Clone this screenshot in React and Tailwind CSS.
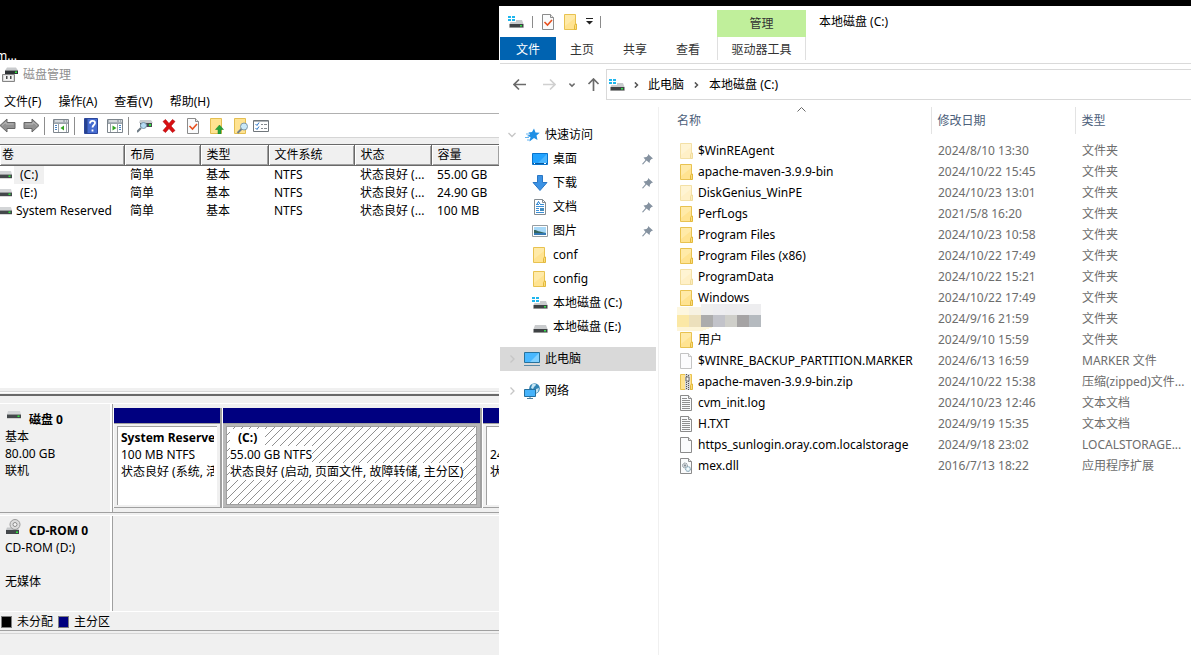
import React, { useState } from "react";

const volumes = [
  { name: "(C:)", size: "55.00 GB", drive: true },
  { name: "(E:)", size: "24.90 GB", drive: true },
  { name: "System Reserved", size: "100 MB" },
];

const files = [
  { name: "$WinREAgent", date: "2024/8/10 13:30", type: "文件夹", icon: "faded" },
  { name: "apache-maven-3.9.9-bin", date: "2024/10/22 15:45", type: "文件夹", icon: "folder" },
  { name: "DiskGenius_WinPE", date: "2024/10/23 13:01", type: "文件夹", icon: "faded" },
  { name: "PerfLogs", date: "2021/5/8 16:20", type: "文件夹", icon: "folder" },
  { name: "Program Files", date: "2024/10/23 10:58", type: "文件夹", icon: "folder" },
  { name: "Program Files (x86)", date: "2024/10/22 17:49", type: "文件夹", icon: "folder" },
  { name: "ProgramData", date: "2024/10/22 15:21", type: "文件夹", icon: "faded" },
  { name: "Windows", date: "2024/10/22 17:49", type: "文件夹", icon: "folder" },
  { name: "", date: "2024/9/16 21:59", type: "文件夹", icon: "mosaic" },
  { name: "用户", date: "2024/9/10 15:59", type: "文件夹", icon: "folder" },
  { name: "$WINRE_BACKUP_PARTITION.MARKER", date: "2024/6/13 16:59", type: "MARKER 文件", icon: "fadedFile" },
  { name: "apache-maven-3.9.9-bin.zip", date: "2024/10/22 15:38", type: "压缩(zipped)文件...", icon: "zip" },
  { name: "cvm_init.log", date: "2024/10/23 12:46", type: "文本文档", icon: "text" },
  { name: "H.TXT", date: "2024/9/19 15:35", type: "文本文档", icon: "text" },
  { name: "https_sunlogin.oray.com.localstorage", date: "2024/9/18 23:02", type: "LOCALSTORAGE...", icon: "file" },
  { name: "mex.dll", date: "2016/7/13 18:22", type: "应用程序扩展", icon: "dll" },
];

function Folder({ faded }) {
  return (
    <svg width="14" height="16" viewBox="0 0 14 16" opacity={faded ? 0.5 : 1}>
      <path d="M.5.5h11v15H.5z" fill="#ffe391" stroke="#e8c250" />
      <path d="M1 1h10v3L1 12z" fill="#ffeaa8" />
      <path d="M10.500 15.500v-4l1-1.500h1v5.500z" fill="#fbdc7c" stroke="#e3b93c" />
    </svg>
  );
}

function Page({ kind }) {
  const pale = kind === "fadedFile";
  return (
    <svg width="13" height="16" viewBox="0 0 13 16" opacity={pale ? 0.5 : 1}>
      <path d="M.5.5h8l3 3v12H.5z" fill="#fafbfc" stroke="#8b8b8b" />
      <path d="M8.500.5v3h3" fill="#e8e8e8" stroke="#8b8b8b" />
      {kind === "text" && (
        <path d="M2 3.500h5M2 5.500h8M2 7.500h8M2 9.500h8M2 11.500h8M2 13.500h8" stroke="#8f8f8f" />
      )}
      {kind === "dll" && (
        <>
          <circle cx="5" cy="7.500" r="2.500" fill="#d6dade" stroke="#8b959c" strokeDasharray="1.500 .6" />
          <circle cx="5" cy="7.500" r="1" fill="#7c868d" />
          <circle cx="8" cy="11" r="2.500" fill="#d3e5ee" stroke="#7e9cab" strokeDasharray="1.500 .6" />
          <circle cx="8" cy="11" r="1" fill="#fff" />
        </>
      )}
      {kind === "check" && <path d="m2.500 8 3 3 4.500-5" fill="none" stroke="#e8501e" strokeWidth="1.600" />}
    </svg>
  );
}

function Zip() {
  return (
    <svg width="14" height="16" viewBox="0 0 14 16">
      <path d="M.5.5h11v15H.5z" fill="#ffe391" stroke="#e8c250" />
      <path d="M5 0h5v16H5z" fill="#d6d6d6" />
      <path d="M6.500 0v16M8.500 1v15" stroke="#555" strokeDasharray="1 1" />
      <path d="M6 3h3v4H6z" fill="#f4f4f4" stroke="#6d6d6d" />
      <path d="M10.500 15.500v-4l1-1.500h1v5.500z" fill="#fbdc7c" stroke="#e3b93c" />
    </svg>
  );
}

function Drive({ windows }) {
  return (
    <svg width="16" height="16" viewBox="0 0 16 16">
      {windows && <path d="M0 2h3v2H0zM4 2h3v2H4zM0 5h3v2H0zM4 5h3v2H4z" fill="#1eb6ee" />}
      <path d={windows ? "M8 6h6l1.500 4h-14L2.500 8H8z" : "M3 6h11l1.500 4h-14z"} fill="#c9cbcd" />
      <path d="M1.500 10h14v3.500h-14z" fill="#3f4245" />
      <path d="M1.500 13.500h14v.500h-14z" fill="#888" />
      <path d="M12 11h2v1.500h-2z" fill="#35e04a" />
    </svg>
  );
}

// flat drive used in the volume list and the disk labels
function SmallDrive() {
  return (
    <svg width="14" height="8" viewBox="0 0 14 8">
      <path d="M1 0h12l1 3.500H0z" fill="#d3d5d7" />
      <path d="M0 3.500h14V7H0z" fill="#44484b" />
      <path d="M0 7h14v.5H0z" fill="#b0b0b0" />
      <path d="M10.500 4.500h2v1.500h-2z" fill="#2ee83c" />
    </svg>
  );
}

function CdDrive() {
  return (
    <svg width="16" height="16" viewBox="0 0 16 16">
      <path d="M2 8.500h11l1 2.500H1z" fill="#c4c6c8" />
      <circle cx="10" cy="5.500" r="5" fill="#dcdcdc" stroke="#9a9a9a" />
      <circle cx="10" cy="5.500" r="2" fill="#f4f4f4" stroke="#8d8d8d" />
      <path d="M1 11h13v4H1z" fill="#44484b" />
      <path d="M11 12.500h2v1.500h-2z" fill="#2ee83c" />
    </svg>
  );
}

function DiskManagementIcon() {
  return (
    <svg width="17" height="16" viewBox="0 0 17 16">
      <path d="M3 3.500 5 .5h9l2 3z" fill="#c9cbcd" />
      <path d="M3 3.500h13V7H3z" fill="#2e3235" />
      <path d="M13 4.500h2V6h-2z" fill="#2ee83c" />
      <path d="M.5 7.500h12v7H.5z" fill="#d9d9d9" stroke="#858585" />
      <path d="M2 8.500h9v5H2z" fill="#f5f5f5" />
      <path d="M4 9h1.500v3H4zM8 9h1.500v3H8z" fill="#4a4a4a" />
    </svg>
  );
}

function Arrow({ right }) {
  return (
    <svg width="17" height="15" viewBox="0 0 17 15" className={right ? "-scale-x-100" : ""}>
      <path d="M1 7.500 8 1v3.500h8v6H8V14z" fill="#929292" stroke="#666" />
      <path d="M3 7.500 7 4v2h7.500" fill="none" stroke="#b8b8b8" />
    </svg>
  );
}

function PaneIcon({ right }) {
  return (
    <svg width="16" height="14" viewBox="0 0 16 14">
      <path d="M.5.5h15v13H.5z" fill="#fff" stroke="#7d858c" />
      <path d="M1 1h14v3H1z" fill="#a9b1b8" />
      <path d="M2 2h8M12 2h1M14 2h1" stroke="#fff" />
      <path d={right ? "M1 4.500h14M3.500 5v8M10.500 5v8" : "M1 4.500h14M5.500 5v8M13.500 5v8"} stroke="#9ba3aa" />
      <path d={right ? "M12 6.500h2M12 8.500h2M12 10.500h2" : "M2 6.500h2M2 8.500h2M2 10.500h2"} stroke="#4a84c4" />
      {right ? <path d="m5.500 6.500 4 2.500-4 2.500z" fill="#33a522" /> : <path d="M11 6.500 7.500 9l3.500 2.500z" fill="#33a522" />}
    </svg>
  );
}

function HelpIcon() {
  return (
    <svg width="14" height="16" viewBox="0 0 14 16">
      <path d="M.5.500h13v15H.5z" fill="#456bd0" stroke="#2c469b" />
      <path d="M1 1h2.500v14H1z" fill="#26428f" />
      <path d="M6 5.500C6 2 11 2 11 5c0 2-2.500 2-2.500 4.500M8.500 11.500v2" fill="none" stroke="#fff" strokeWidth="1.800" />
    </svg>
  );
}

function ConnectIcon() {
  return (
    <svg width="16" height="14" viewBox="0 0 16 14">
      <path d="M3 1h11l2 3H2z" fill="#c8cccf" />
      <path d="M3 4h12v4H3z" fill="#484d50" />
      <path d="M12 5h2v2h-2z" fill="#2ee83c" />
      <circle cx="6.500" cy="6.500" r="3" fill="#b5dcf5" stroke="#7895a9" />
      <path d="m4 9-4 4" stroke="#6d7a84" strokeWidth="2" />
    </svg>
  );
}

function DeleteIcon() {
  return (
    <svg width="14" height="14" viewBox="0 0 14 14">
      <path d="m1 2.500 2.500-2L7 4.500l3.500-4L13 2.500 9 7l4 4.500-2.500 2L7 9.500l-3.500 4L1 11.500 5 7z" fill="#d90f12" stroke="#ad0508" strokeWidth=".6" />
    </svg>
  );
}

function FolderAction({ search }) {
  return (
    <svg width="16" height="16" viewBox="0 0 16 16">
      <path d="M1.500.5h11v15h-11z" fill="#ffe391" stroke="#e3be52" />
      {search ? (
        <>
          <circle cx="11" cy="8.500" r="3.500" fill="#c9e8f8" stroke="#7f98a8" />
          <path d="m8.500 11-4 4" stroke="#71808b" strokeWidth="2" />
        </>
      ) : (
        <path d="m10.500 7 4 4.500H12V16H9v-4.500H6.500z" fill="#25a43a" stroke="#14802a" strokeWidth=".5" />
      )}
    </svg>
  );
}

function ListIcon() {
  return (
    <svg width="16" height="12" viewBox="0 0 16 12">
      <path d="M.5.5h15v11H.5z" fill="#fff" stroke="#70767b" />
      <path d="M1 1.500h14" stroke="#b0b5b9" />
      <path d="m2.500 4 1.500 1.500 2-3M2.500 8 4 9.500l2-3" fill="none" stroke="#2472c8" />
      <path d="M8 4.500h2M11 4.500h3M8 8.500h2M11 8.500h3" stroke="#858b90" />
    </svg>
  );
}

function StarIcon() {
  return (
    <svg width="15" height="14" viewBox="0 0 15 14">
      <path d="m9 .5 1.500 4 4.200.200-3.200 2.800 1 4.500L9 10l-4.500 3.500L5.500 9 2 8l3-1.500L3.500 4.500 7 4z" fill="#1f8fe5" />
      <path d="M0 9.500h4M1 6h3M2 12h3" stroke="#66b4ef" />
    </svg>
  );
}

function DesktopIcon() {
  return (
    <svg width="16" height="12" viewBox="0 0 16 12">
      <path d="M.5.500h15v11H.5z" fill="#22a3ff" stroke="#0874cd" />
      <path d="m15 1-9 9h9z" fill="#4ab6ff" />
      <path d="M1 10.500h14" stroke="#075aa0" />
      <path d="M2 10.500h1M12 10.500h2" stroke="#fff" />
    </svg>
  );
}

function DownloadIcon() {
  return (
    <svg width="16" height="16" viewBox="0 0 16 16">
      <path d="M5.500.5h5v7H15L8 15.500 1 7.500h4.500z" fill="#3b92e4" stroke="#2a77c5" />
    </svg>
  );
}

function DocumentIcon() {
  return (
    <svg width="12" height="16" viewBox="0 0 12 16">
      <path d="M.5.5h8l3 3v12H.5z" fill="#fff" stroke="#858c91" />
      <path d="M8.500.5v3h3" fill="none" stroke="#858c91" />
      <path d="M2 5.500h3M6 5.500h4M2 7.500h8M2 9.500h3M2 11.500h3M2 13.500h8" stroke="#3b8fd6" />
      <path d="m3 5 1.500-2.500L6 5" fill="none" stroke="#1876ca" />
      <path d="M6 9h4v3H6z" fill="#438bbd" />
    </svg>
  );
}

function PictureIcon() {
  return (
    <svg width="16" height="12" viewBox="0 0 16 12">
      <path d="M.5.5h15v11H.5z" fill="#fff" stroke="#969da2" />
      <path d="M2 2h12v8H2z" fill="#a8d9f8" />
      <path d="M2 5c3 0 5 2 12 3v2H2z" fill="#35665f" />
      <path d="M2 8h12v2H2z" fill="#3579b4" />
    </svg>
  );
}

function ComputerIcon() {
  return (
    <svg width="16" height="16" viewBox="0 0 16 16">
      <path d="M.5 1.500h15v10H.5z" fill="#49b8ff" stroke="#28729c" />
      <path d="m15 2-9 9h9z" fill="#80d0ff" />
      <path d="M0 14.500h16" stroke="#5a89a6" />
    </svg>
  );
}

function NetworkIcon() {
  return (
    <svg width="16" height="16" viewBox="0 0 16 16">
      <circle cx="10.500" cy="5.500" r="5.300" fill="#3083b3" />
      <path d="M8 2c1-2 4-1 4 0l-2 2-1 2-2-1zM12 6l3-1-1 4-2 1z" fill="#c6e6f4" />
      <path d="M.5 6.500h11v7H.5z" fill="#46b3fb" stroke="#246f9e" />
      <path d="M6 14v1.500M3 15.500h6" stroke="#4c7e9b" />
    </svg>
  );
}

function Pin() {
  return (
    <svg width="11" height="11" viewBox="0 0 11 11">
      <path d="m6 0 5 4.500-1.500.5L8 6.500 7.500 9l-3-2.500L1 10.500 0 10l3.500-4L1.500 3.500l3-.500L6 1.500z" fill="#8592a0" />
    </svg>
  );
}

function Chevron({ down, small, className }) {
  return (
    <svg width={small ? 6 : 8} height={small ? 6 : 8} viewBox="0 0 8 8" className={className}>
      <path d={down ? "m.5 2 3.500 3.500L7.500 2" : "m2.500.5 3.500 3.500-3.500 3.500"} fill="none" stroke="currentColor" strokeWidth={small ? 2 : 1.3} />
    </svg>
  );
}

function NavArrow({ up, right }) {
  return (
    <svg width="13" height="13" viewBox="0 0 13 13" className={up ? "rotate-90" : right ? "rotate-180" : ""}>
      <path d="M1 6.500h12M6 1.500l-5 5 5 5" fill="none" stroke="currentColor" strokeWidth="1.700" />
    </svg>
  );
}

// pixelated cover over a hidden file name
function Mosaic() {
  const dark = ["#fbe8a5", "#ece0bc", "#acacac", "#c2c3ca", "#cfcfca", "#a5a3a4", "#b5babf"];
  const light = ["#fdf7df", "#f7f2e2", "#efefef", "#ededf0", "#ececee", "#ededef", "#ededef"];
  return (
    <svg width="84" height="27" viewBox="0 0 84 27" shapeRendering="crispEdges" className="absolute left-0 -top-1">
      {light.map((c, i) => (
        <rect key={c + i} x={i * 12} y={i < 2 ? 3 : 0} width="12" height="12" fill={c} />
      ))}
      {dark.map((c, i) => (
        <rect key={c} x={i * 12} y="11" width="12" height="12" fill={c} />
      ))}
      <path d="M0 23h36l-12 4H0z" fill="#fdf5d8" />
    </svg>
  );
}

function FileIcon({ kind }) {
  if (kind === "folder") return <Folder />;
  if (kind === "faded") return <Folder faded />;
  if (kind === "zip") return <Zip />;
  return <Page kind={kind} />;
}

function ToolButton({ label, children }) {
  return (
    <button type="button" aria-label={label} className="flex h-5 w-6 shrink-0 items-center justify-center">
      {children}
    </button>
  );
}

function ToolSeparator() {
  return <span className="mr-1 ml-px h-[18px] w-px shrink-0 bg-[#8d8d8d]" />;
}

function VolumeTable() {
  const heads = ["卷", "布局", "类型", "文件系统", "状态", "容量"];
  return (
    <table className="w-full table-fixed border-collapse text-left leading-[18px]">
      <colgroup>
        <col className="w-[124px]" />
        <col className="w-[76px]" />
        <col className="w-[68px]" />
        <col className="w-[86px]" />
        <col className="w-[77px]" />
        <col />
      </colgroup>
      <thead>
        <tr className="h-[21px] bg-[#f0f0f0]">
          {heads.map((h, i) => (
            <th
              key={h}
              className={`border-t border-b border-[#696969] font-normal shadow-[inset_1px_1px_0_#fff,inset_-1px_-1px_0_#a0a0a0] ${
                i < heads.length - 1 ? "border-r" : ""
              } ${i === 0 ? "pl-0.5" : "pl-1.5"}`}
            >
              {h}
            </th>
          ))}
        </tr>
      </thead>
      <tbody>
        {volumes.map((v, i) => (
          <tr key={v.name} className="h-[18px] whitespace-nowrap">
            <td className="p-0">
              <div className="flex items-center">
                <span className="-ml-0.5 w-4 shrink-0">
                  <SmallDrive />
                </span>
                <span className={`${v.drive ? "px-1.5" : "pl-0.5"} ${i === 0 ? "bg-[#f0f0f0]" : ""}`}>{v.name}</span>
              </div>
            </td>
            <td className="pl-1.5">简单</td>
            <td className="pl-1.5">基本</td>
            <td className="pl-1.5">NTFS</td>
            <td className="pl-1.5">状态良好 (...</td>
            <td className="pl-1.5">{v.size}</td>
          </tr>
        ))}
      </tbody>
    </table>
  );
}

function Partition({ width, title, size, status, selected }) {
  return (
    <div className={`flex shrink-0 flex-col border-r-2 border-l border-r-[#a0a0a0] border-l-white ${width}`}>
      <div className="h-[15px] bg-[#000080]" />
      <div className={`flex flex-1 border-t border-b border-[#a0a0a0] px-[3px] py-0.5 ${selected ? "bg-[#b9b9b9]" : "bg-[#f0f0f0]"}`}>
        <div
          className={`relative min-w-0 flex-1 border-[#a0a0a0] bg-white px-[3px] pt-0.5 whitespace-nowrap ${
            selected ? "border" : "border-t border-l"
          }`}
        >
          {selected && (
            <svg className="absolute inset-0 h-full w-full">
              <defs>
                <pattern id="hatch" width="8" height="8" patternUnits="userSpaceOnUse">
                  <path d="M-1 9 9-1" stroke="#909090" strokeWidth="1" shapeRendering="crispEdges" />
                </pattern>
              </defs>
              <rect width="100%" height="100%" fill="url(#hatch)" />
            </svg>
          )}
          <div className="relative flex flex-col items-start overflow-hidden leading-[17px]">
            <b className={`min-h-[17px] bg-white ${selected ? "px-2" : ""}`}>{title}</b>
            <span className="bg-white">{size}</span>
            <span className="bg-white">{status}</span>
          </div>
        </div>
      </div>
    </div>
  );
}

function DiskManagement() {
  return (
    <section className="flex min-w-0 flex-1 flex-col overflow-hidden bg-white">
      <header className="flex h-[30px] items-center gap-1 pl-0.5 text-[#8f8f8f]">
        <DiskManagementIcon />
        <h1>磁盘管理</h1>
      </header>
      <nav className="flex h-[24px] items-center gap-[17px] border-b border-[#b0b0b0] pl-1">
        <button type="button">文件(F)</button>
        <button type="button">操作(A)</button>
        <button type="button">查看(V)</button>
        <button type="button">帮助(H)</button>
      </nav>
      <div className="flex h-[23px] items-center">
        <div className="-ml-[5px] flex items-center">
          <ToolButton label="后退"><Arrow /></ToolButton>
          <ToolButton label="前进"><Arrow right /></ToolButton>
          <ToolSeparator />
          <ToolButton label="显示控制台树"><PaneIcon /></ToolButton>
          <ToolSeparator />
          <ToolButton label="帮助"><HelpIcon /></ToolButton>
          <ToolButton label="显示操作窗格"><PaneIcon right /></ToolButton>
          <ToolSeparator />
          <ToolButton label="连接"><ConnectIcon /></ToolButton>
          <ToolButton label="删除"><DeleteIcon /></ToolButton>
          <ToolButton label="属性"><Page kind="check" /></ToolButton>
          <ToolButton label="打开"><FolderAction /></ToolButton>
          <ToolButton label="浏览"><FolderAction search /></ToolButton>
          <button type="button" aria-label="设置"><ListIcon /></button>
        </div>
      </div>
      <div className="h-[7px] border-t border-[#d5d5d5] bg-[#f0f0f0]" />
      <div className="h-[244px]">
        <VolumeTable />
      </div>
      <div className="h-2 border-b-2 border-[#696969] bg-[#f0f0f0] pt-[3px]">
        <div className="h-0.5 border-t border-[#d8d8d8] bg-white" />
      </div>
      <div className="flex flex-1 flex-col bg-[#f0f0f0]">
        <div className="mt-[7px] flex h-[110px] border-t border-b border-t-white border-b-[#a0a0a0]">
          <div className="w-[113px] shrink-0 border-r border-[#a0a0a0] pt-[7px] pl-[5px] leading-[17px] shadow-[inset_-2px_0_0_#fff]">
            <div className="flex gap-2 pl-0.5">
              <SmallDrive />
              <b>磁盘 0</b>
            </div>
            <p>基本</p>
            <p>80.00 GB</p>
            <p>联机</p>
          </div>
          <div className="flex min-w-0 flex-1 overflow-hidden pt-1 pb-1">
            <Partition width="w-[109px]" title="System Reserve" size="100 MB NTFS" status="状态良好 (系统, 活" />
            <Partition width="w-[260px]" title="(C:)" size="55.00 GB NTFS" status="状态良好 (启动, 页面文件, 故障转储, 主分区)" selected />
            <Partition width="w-[117px]" title="" size="24.90 GB NTFS" status="状态良好 (主分区)" />
          </div>
        </div>
        <div className="mt-0.5 flex h-[96px] border-t border-white">
          <div className="w-[113px] shrink-0 border-r border-[#a0a0a0] pt-[3px] pl-[5px] leading-[17px] shadow-[inset_-2px_0_0_#fff]">
            <div className="flex gap-2">
              <CdDrive />
              <b className="pt-[3px]">CD-ROM 0</b>
            </div>
            <p>CD-ROM (D:)</p>
            <p className="mt-[17px]">无媒体</p>
          </div>
        </div>
        <footer className="flex h-5 items-center gap-[5px] border-t border-b border-t-white border-b-[#a0a0a0] pt-px pl-px">
          <span className="h-3 w-[11px] border border-[#808080] bg-black" />
          <span>未分配</span>
          <span className="h-3 w-[11px] border border-[#808080] bg-[#000080]" />
          <span>主分区</span>
        </footer>
        <div className="mt-0.5 border-t border-[#d5d5d5]" />
      </div>
    </section>
  );
}

function NavItem({ icon, label, pinned }) {
  return (
    <li className="flex h-6 items-center pr-[3px] pl-8">
      <a href="#" className="flex min-w-0 flex-1 items-center gap-[5px]">
        <span className="flex w-4 shrink-0 justify-center">{icon}</span>
        {label}
      </a>
      {pinned && <Pin />}
    </li>
  );
}

function NavRoot({ icon, label, open, active }) {
  return (
    <div className={`flex h-6 items-center gap-2 pl-2 ${active ? "bg-[#d9d9d9]" : ""}`}>
      <Chevron down={open} className="text-[#c6c6c6]" />
      <a href="#" className="flex items-center gap-[5px]">
        <span className="flex w-4 shrink-0 justify-center">{icon}</span>
        {label}
      </a>
    </div>
  );
}

function Ribbon() {
  return (
    <div className="flex h-[58px] border-b border-[#dadada]">
      <div className="flex w-[217px] shrink-0 flex-col">
        <div className="flex h-[31px] items-center gap-[9px] pl-2">
          <Drive windows />
          <span className="-ml-px h-3 w-px bg-[#8b8b8b]" />
          <Page kind="check" />
          <Folder />
          <button type="button" aria-label="自定义快速访问工具栏" className="-ml-px">
            <svg width="7" height="7" viewBox="0 0 7 7">
              <path d="M0 .5h7" stroke="#222" />
              <path d="M0 3h7L3.500 6.500z" fill="#222" />
            </svg>
          </button>
          <span className="-ml-0.5 h-3 w-px bg-[#8b8b8b]" />
        </div>
        <div className="flex h-[23px] items-center text-[#333]">
          <button type="button" className="mr-3.5 h-full w-14 bg-[#0063b1] pt-0.5 text-white">文件</button>
          <div className="flex gap-[29px] pt-0.5">
            <button type="button">主页</button>
            <button type="button">共享</button>
            <button type="button">查看</button>
          </div>
        </div>
      </div>
      <div className="flex w-[89px] shrink-0 flex-col pt-1 text-[#333]">
        <button type="button" className="h-[27px] bg-[#c0ef9b] pt-px">管理</button>
        <button type="button" className="h-[23px] border-r border-l border-[#dfdfdf] pt-0.5">驱动器工具</button>
      </div>
      <h2 className="pt-1.5 pl-[13px] leading-5">本地磁盘 (C:)</h2>
    </div>
  );
}

function Explorer() {
  const [selected, setSelected] = useState(null);
  return (
    <section className="mt-1.5 flex min-w-0 flex-1 flex-col overflow-hidden bg-white pl-px">
      <Ribbon />
      <div className="flex h-[41px] items-center">
        <div className="flex w-[106px] shrink-0 items-center pl-[13px] text-[#6b6b6b]">
          <button type="button" aria-label="返回"><NavArrow /></button>
          <button type="button" aria-label="前进" className="ml-[17px] text-[#d0d0d0]"><NavArrow right /></button>
          <button type="button" aria-label="最近浏览的位置" className="ml-[13px]"><Chevron down small /></button>
          <button type="button" aria-label="上移" className="ml-3"><NavArrow up /></button>
        </div>
        <div className="flex h-[31px] flex-1 items-center border border-r-0 border-[#d9d9d9] pl-0.5">
          <Drive windows />
          <Chevron small className="ml-2 text-[#555]" />
          <a href="#" className="ml-[9px]">此电脑</a>
          <Chevron small className="ml-[9px] text-[#555]" />
          <a href="#" className="ml-[10px]">本地磁盘 (C:)</a>
        </div>
      </div>
      <div className="flex flex-1 pt-0.5">
        <aside className="w-[159px] shrink-0 border-r border-[#f0f0f0] pt-4 pr-0.5">
          <NavRoot icon={<StarIcon />} label="快速访问" open />
          <ul>
            <NavItem icon={<DesktopIcon />} label="桌面" pinned />
            <NavItem icon={<DownloadIcon />} label="下载" pinned />
            <NavItem icon={<DocumentIcon />} label="文档" pinned />
            <NavItem icon={<PictureIcon />} label="图片" pinned />
            <NavItem icon={<Folder />} label="conf" />
            <NavItem icon={<Folder />} label="config" />
            <NavItem icon={<Drive windows />} label="本地磁盘 (C:)" />
            <NavItem icon={<Drive />} label="本地磁盘 (E:)" />
          </ul>
          <div className="mt-2 flex flex-col gap-2">
            <NavRoot icon={<ComputerIcon />} label="此电脑" active />
            <NavRoot icon={<NetworkIcon />} label="网络" />
          </div>
        </aside>
        <main className="min-w-0 flex-1 overflow-hidden pl-[18px]">
          <table className="w-full table-fixed border-collapse text-left whitespace-nowrap">
            <colgroup>
              <col className="w-[254px]" />
              <col className="w-[144px]" />
              <col />
            </colgroup>
            <thead>
              <tr className="h-[27px] text-[#4c607a]">
                <th className="relative p-0 font-normal">
                  名称
                  <svg width="9" height="5" viewBox="0 0 9 5" className="absolute top-0 left-[120px]">
                    <path d="m.5 4.500 4-4 4 4" fill="none" stroke="#666" />
                  </svg>
                </th>
                <th className="border-l border-[#e3e3e3] p-0 pl-1.5 font-normal">修改日期</th>
                <th className="border-l border-[#e3e3e3] p-0 pl-1.5 font-normal">类型</th>
              </tr>
              <tr className="h-1.5" />
            </thead>
            <tbody>
              {files.map((f) => (
                <tr
                  key={f.date + f.name}
                  onClick={() => setSelected(f.name)}
                  className={`h-[21px] text-[#6d6d6d] ${selected === f.name ? "bg-[#cce8ff]" : ""}`}
                >
                  <td className="relative p-0 text-black">
                    {f.icon === "mosaic" ? (
                      <Mosaic />
                    ) : (
                      <div className="flex items-center pl-[3px]">
                        <span className="w-[18px] shrink-0">
                          <FileIcon kind={f.icon} />
                        </span>
                        {f.name}
                      </div>
                    )}
                  </td>
                  <td className="p-0 pl-[7px]">{f.date}</td>
                  <td className="p-0 pl-[7px]">{f.type}</td>
                </tr>
              ))}
            </tbody>
          </table>
        </main>
      </div>
    </section>
  );
}

function App() {
  return (
    <div className="flex min-h-screen bg-black font-['Noto_Sans','Noto_Sans_CJK_SC',sans-serif] text-[12px] leading-[18px] text-black">
      <div className="flex w-[499px] shrink-0 flex-col">
        <div className="flex h-[60px] items-end overflow-hidden text-white">
          <span className="-ml-1 leading-2">m...</span>
        </div>
        <DiskManagement />
      </div>
      <Explorer />
    </div>
  );
}

export default App;
